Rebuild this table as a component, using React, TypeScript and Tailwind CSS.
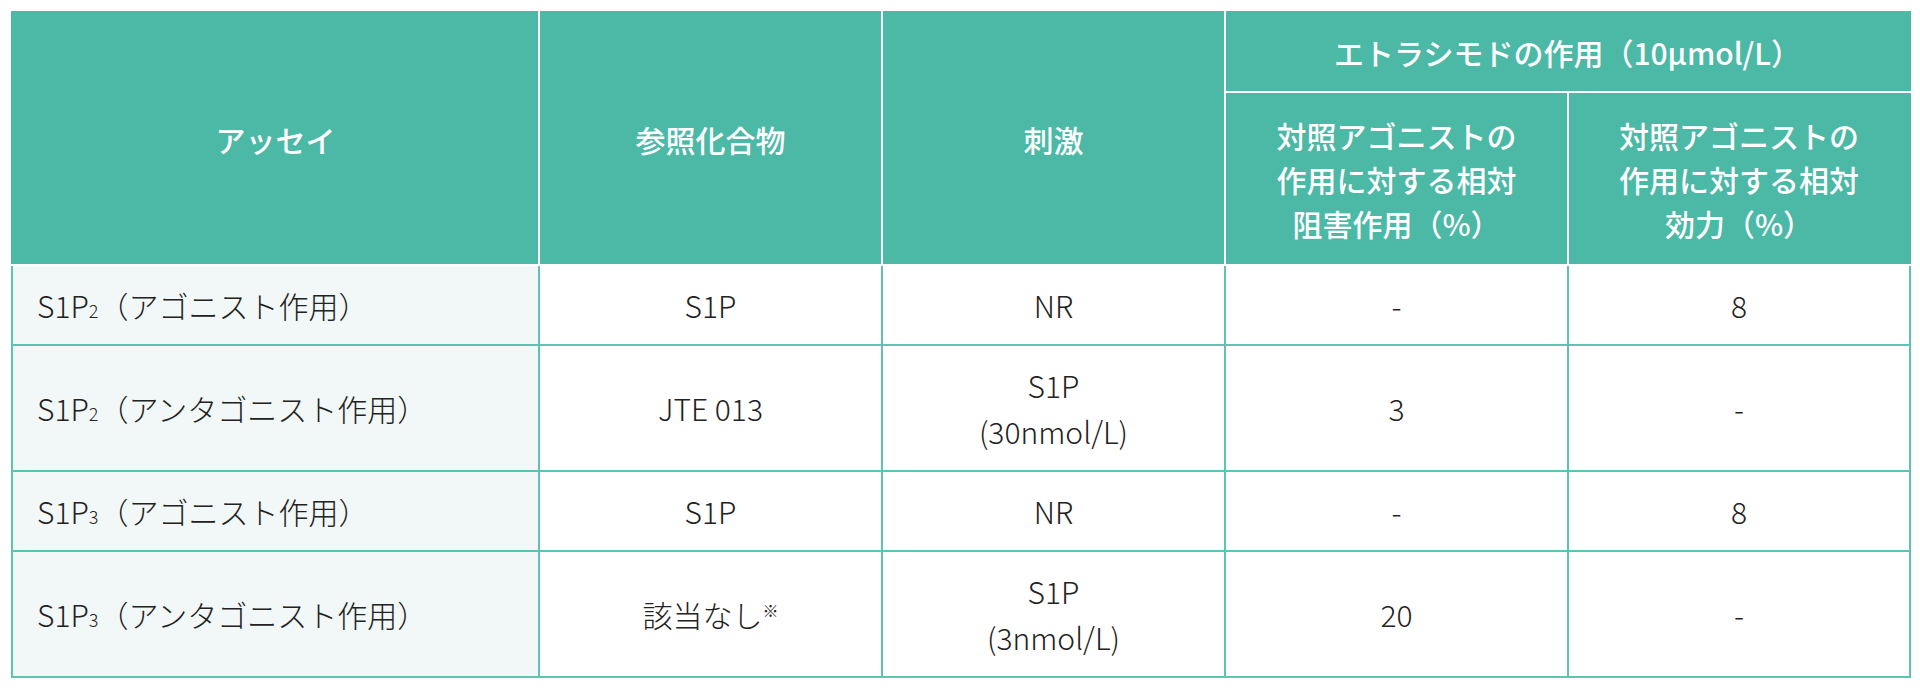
const headCell =
  "bg-[#4bb9a6] text-white font-medium text-[30px] leading-[44px] text-center align-middle border-2 border-white";
const bodyCell =
  "border-2 border-[#5cc4b0] text-[30px] leading-[46px] font-light text-[#222] align-middle py-4";

const Sub = ({ n }: { n: string }) => <span className="text-[18px] leading-none">{n}</span>;

type Row = {
  assay: React.ReactNode;
  compound: React.ReactNode;
  stim: React.ReactNode;
  inhibit: string;
  efficacy: string;
};

const rows: Row[] = [
  {
    assay: (
      <>
        S1P<Sub n="2" />（アゴニスト作用）
      </>
    ),
    compound: "S1P",
    stim: "NR",
    inhibit: "-",
    efficacy: "8",
  },
  {
    assay: (
      <>
        S1P<Sub n="2" />（アンタゴニスト作用）
      </>
    ),
    compound: "JTE 013",
    stim: (
      <>
        S1P
        <br />
        (30nmol/L)
      </>
    ),
    inhibit: "3",
    efficacy: "-",
  },
  {
    assay: (
      <>
        S1P<Sub n="3" />（アゴニスト作用）
      </>
    ),
    compound: "S1P",
    stim: "NR",
    inhibit: "-",
    efficacy: "8",
  },
  {
    assay: (
      <>
        S1P<Sub n="3" />（アンタゴニスト作用）
      </>
    ),
    compound: (
      <>
        該当なし<sup className="text-[16px] -top-[0.6em]">※</sup>
      </>
    ),
    stim: (
      <>
        S1P
        <br />
        (3nmol/L)
      </>
    ),
    inhibit: "20",
    efficacy: "-",
  },
];

export default function App() {
  return (
    <div
      className="min-h-screen bg-white p-[11px]"
      style={{ fontFamily: '"Noto Sans CJK JP", "Noto Sans", sans-serif' }}
    >
      <table className="table-fixed w-[1898px] border-collapse border-2 border-[#5cc4b0]">
        <colgroup>
          <col className="w-[527px]" />
          <col className="w-[343px]" />
          <col className="w-[343px]" />
          <col className="w-[343px]" />
          <col className="w-[342px]" />
        </colgroup>
        <thead>
          <tr className="h-[80px]">
            <th rowSpan={2} className={`${headCell} border-l-[#4bb9a6] border-t-[#4bb9a6]`}>
              アッセイ
            </th>
            <th rowSpan={2} className={`${headCell} border-t-[#4bb9a6]`}>
              参照化合物
            </th>
            <th rowSpan={2} className={`${headCell} border-t-[#4bb9a6]`}>
              刺激
            </th>
            <th colSpan={2} className={`${headCell} border-t-[#4bb9a6] border-r-[#4bb9a6]`}>
              エトラシモドの作用（10μmol/L）
            </th>
          </tr>
          <tr className="h-[173px]">
            <th className={headCell}>
              対照アゴニストの
              <br />
              作用に対する相対
              <br />
              阻害作用（%）
            </th>
            <th className={`${headCell} border-r-[#4bb9a6]`}>
              対照アゴニストの
              <br />
              作用に対する相対
              <br />
              効力（%）
            </th>
          </tr>
        </thead>
        <tbody>
          {rows.map((r, i) => (
            <tr key={i}>
              <td className={`${bodyCell} bg-[#f2f8f7] pl-6 text-left`}>{r.assay}</td>
              <td className={`${bodyCell} text-center`}>{r.compound}</td>
              <td className={`${bodyCell} text-center`}>{r.stim}</td>
              <td className={`${bodyCell} text-center`}>{r.inhibit}</td>
              <td className={`${bodyCell} text-center`}>{r.efficacy}</td>
            </tr>
          ))}
        </tbody>
      </table>
    </div>
  );
}
